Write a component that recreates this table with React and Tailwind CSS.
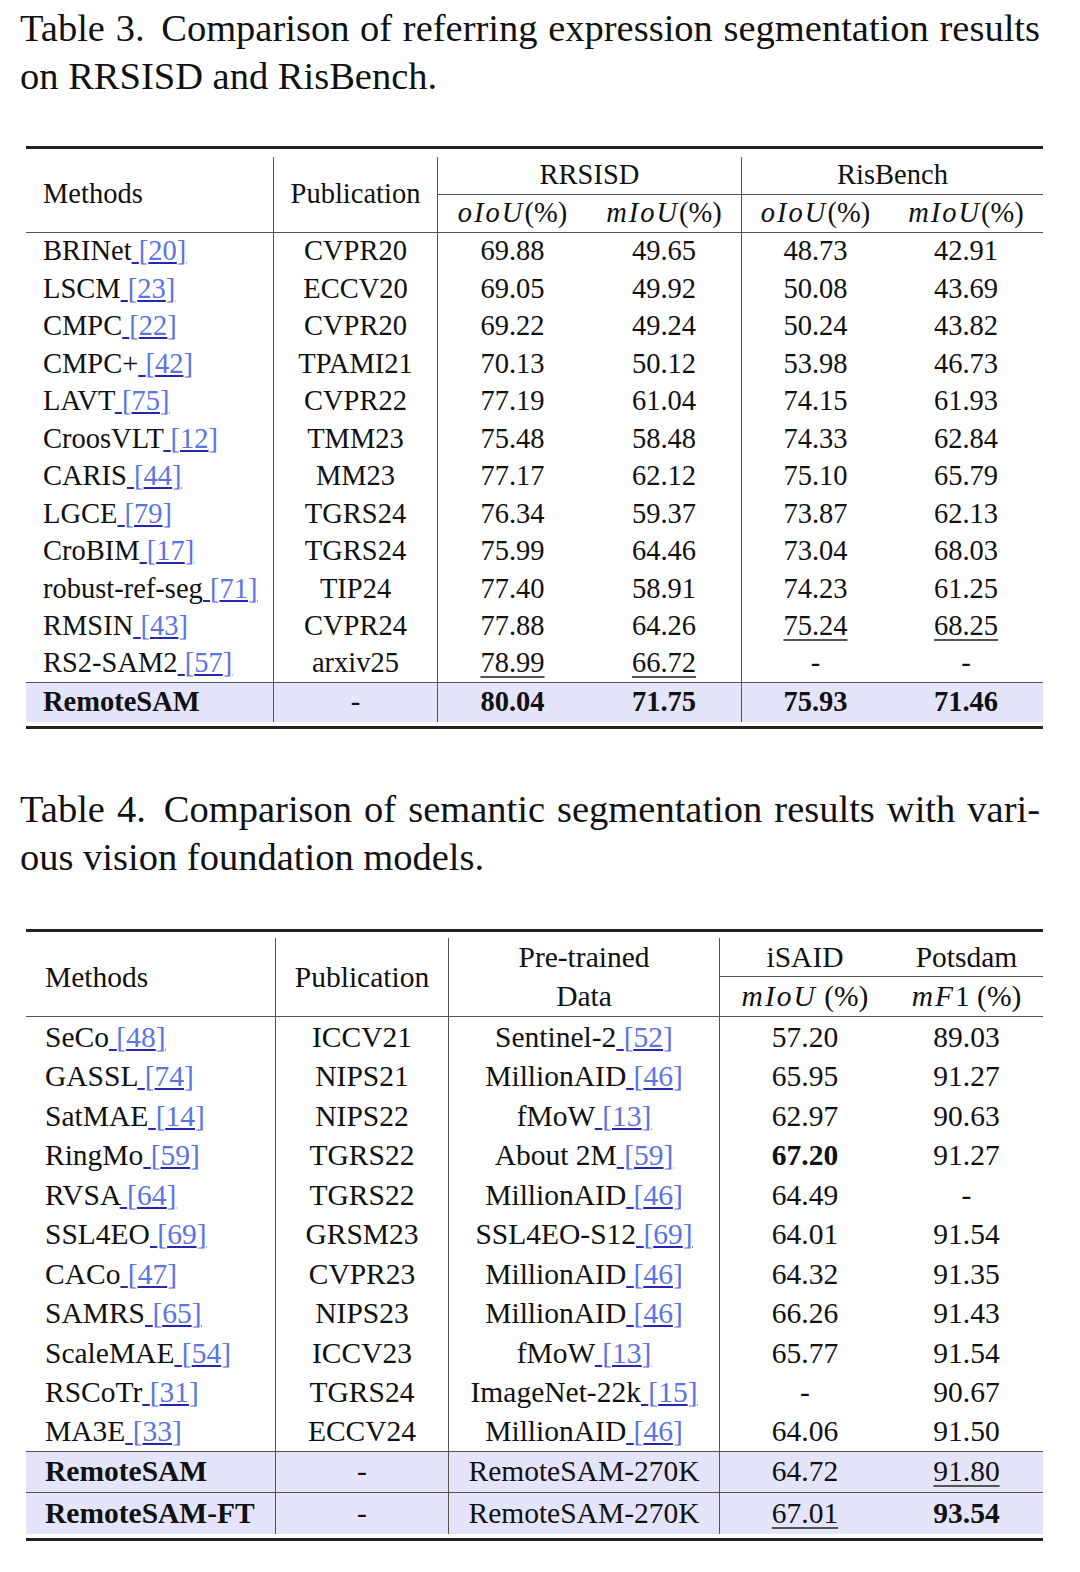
import clsx from "clsx";

const t3 = [
  ["BRINet", "20", "CVPR20", "69.88", "49.65", "48.73", "42.91"],
  ["LSCM", "23", "ECCV20", "69.05", "49.92", "50.08", "43.69"],
  ["CMPC", "22", "CVPR20", "69.22", "49.24", "50.24", "43.82"],
  ["CMPC+", "42", "TPAMI21", "70.13", "50.12", "53.98", "46.73"],
  ["LAVT", "75", "CVPR22", "77.19", "61.04", "74.15", "61.93"],
  ["CroosVLT", "12", "TMM23", "75.48", "58.48", "74.33", "62.84"],
  ["CARIS", "44", "MM23", "77.17", "62.12", "75.10", "65.79"],
  ["LGCE", "79", "TGRS24", "76.34", "59.37", "73.87", "62.13"],
  ["CroBIM", "17", "TGRS24", "75.99", "64.46", "73.04", "68.03"],
  ["robust-ref-seg", "71", "TIP24", "77.40", "58.91", "74.23", "61.25"],
  ["RMSIN", "43", "CVPR24", "77.88", "64.26", "_75.24", "_68.25"],
  ["RS2-SAM2", "57", "arxiv25", "_78.99", "_66.72", "-", "-"],
];

const t4 = [
  ["SeCo", "48", "ICCV21", "Sentinel-2", "52", "57.20", "89.03"],
  ["GASSL", "74", "NIPS21", "MillionAID", "46", "65.95", "91.27"],
  ["SatMAE", "14", "NIPS22", "fMoW", "13", "62.97", "90.63"],
  ["RingMo", "59", "TGRS22", "About 2M", "59", "*67.20", "91.27"],
  ["RVSA", "64", "TGRS22", "MillionAID", "46", "64.49", "-"],
  ["SSL4EO", "69", "GRSM23", "SSL4EO-S12", "69", "64.01", "91.54"],
  ["CACo", "47", "CVPR23", "MillionAID", "46", "64.32", "91.35"],
  ["SAMRS", "65", "NIPS23", "MillionAID", "46", "66.26", "91.43"],
  ["ScaleMAE", "54", "ICCV23", "fMoW", "13", "65.77", "91.54"],
  ["RSCoTr", "31", "TGRS24", "ImageNet-22k", "15", "-", "90.67"],
  ["MA3E", "33", "ECCV24", "MillionAID", "46", "64.06", "91.50"],
];

const Cite = ({ n }) => (
  <span className="text-[#5a74e6] underline decoration-[#2626b4] decoration-2 underline-offset-[2px]">
    {" "}[{n}]
  </span>
);

// "_" = second best (underlined), "*" = best (bold)
const Val = ({ v }) => {
  if (v.startsWith("_"))
    return (
      <span className="underline decoration-[#555] decoration-2 underline-offset-[4px]">
        {v.slice(1)}
      </span>
    );
  if (v.startsWith("*")) return <span className="font-bold">{v.slice(1)}</span>;
  return <span>{v}</span>;
};

const Mi = ({ children }) => <i className="tracking-[2px]">{children}</i>;

const cell = "flex items-center justify-center border-[#555]";

const Caption = ({ label, first, second }) => (
  <div className="pl-[20px] w-[1040px] text-[38.5px] leading-[48px] text-[#111]">
    <div className="text-justify [text-align-last:justify]">
      {label}{" "}
      <span className="ml-[6px]">{first}</span>
    </div>
    <div>{second}</div>
  </div>
);

function Table3() {
  return (
    <div className="ml-[26px] w-[1017px] text-[28.5px] text-[#111]">
      <div className="h-[3px] bg-[#222]" />
      <div className="h-[8px]" />
      <div className="grid grid-cols-[248px_164px_149px_155px_147px_154px]">
        <div className={clsx(cell, "row-span-2 justify-start pl-[17px] border-r border-b")}>Methods</div>
        <div className={clsx(cell, "row-span-2 border-r border-b")}>Publication</div>
        <div className={clsx(cell, "col-span-2 h-[38px] border-r border-b")}>RRSISD</div>
        <div className={clsx(cell, "col-span-2 h-[38px] border-b")}>RisBench</div>
        <div className={clsx(cell, "h-[38px] border-b")}><Mi>oIoU</Mi>(%)</div>
        <div className={clsx(cell, "h-[38px] border-b border-r")}><Mi>mIoU</Mi>(%)</div>
        <div className={clsx(cell, "h-[38px] border-b")}><Mi>oIoU</Mi>(%)</div>
        <div className={clsx(cell, "h-[38px] border-b")}><Mi>mIoU</Mi>(%)</div>

        {t3.map((r, i) => {
          const b = i === t3.length - 1 ? "border-b" : "";
          return [
            <div key={i + "a"} className={clsx(cell, "h-[37.5px] justify-start pl-[17px] border-r", b)}>
              <span>{r[0]}<Cite n={r[1]} /></span>
            </div>,
            <div key={i + "b"} className={clsx(cell, "h-[37.5px] border-r", b)}>{r[2]}</div>,
            <div key={i + "c"} className={clsx(cell, "h-[37.5px]", b)}><Val v={r[3]} /></div>,
            <div key={i + "d"} className={clsx(cell, "h-[37.5px] border-r", b)}><Val v={r[4]} /></div>,
            <div key={i + "e"} className={clsx(cell, "h-[37.5px]", b)}><Val v={r[5]} /></div>,
            <div key={i + "f"} className={clsx(cell, "h-[37.5px]", b)}><Val v={r[6]} /></div>,
          ];
        })}

        <div className={clsx(cell, "h-[39px] justify-start pl-[17px] border-r bg-[#e4e4fa] font-bold")}>RemoteSAM</div>
        <div className={clsx(cell, "h-[39px] border-r bg-[#e4e4fa]")}>-</div>
        <div className={clsx(cell, "h-[39px] bg-[#e4e4fa] font-bold")}>80.04</div>
        <div className={clsx(cell, "h-[39px] border-r bg-[#e4e4fa] font-bold")}>71.75</div>
        <div className={clsx(cell, "h-[39px] bg-[#e4e4fa] font-bold")}>75.93</div>
        <div className={clsx(cell, "h-[39px] bg-[#e4e4fa] font-bold")}>71.46</div>
      </div>
      <div className="h-[4px]" />
      <div className="h-[3px] bg-[#222]" />
    </div>
  );
}

function Table4() {
  const last = [
    ["RemoteSAM", "64.72", "_91.80"],
    ["RemoteSAM-FT", "_67.01", "*93.54"],
  ];
  return (
    <div className="ml-[26px] w-[1017px] text-[29.5px] text-[#111]">
      <div className="h-[3px] bg-[#222]" />
      <div className="h-[6px]" />
      <div className="grid grid-cols-[250px_173px_271px_170px_153px]">
        <div className={clsx(cell, "row-span-2 justify-start pl-[19px] border-r border-b")}>Methods</div>
        <div className={clsx(cell, "row-span-2 border-r border-b")}>Publication</div>
        <div className={clsx(cell, "h-[39px] border-r")}>Pre-trained</div>
        <div className={clsx(cell, "h-[39px] border-b")}>iSAID</div>
        <div className={clsx(cell, "h-[39px] border-b")}>Potsdam</div>
        <div className={clsx(cell, "h-[40px] border-r border-b")}>Data</div>
        <div className={clsx(cell, "h-[40px] border-b")}><Mi>mIoU</Mi>&nbsp;(%)</div>
        <div className={clsx(cell, "h-[40px] border-b")}><Mi>mF</Mi>1&nbsp;(%)</div>

        {t4.map((r, i) => {
          const b = i === t4.length - 1 ? "border-b" : "";
          return [
            <div key={i + "a"} className={clsx(cell, "h-[39.5px] justify-start pl-[19px] border-r", b)}>
              <span>{r[0]}<Cite n={r[1]} /></span>
            </div>,
            <div key={i + "b"} className={clsx(cell, "h-[39.5px] border-r", b)}>{r[2]}</div>,
            <div key={i + "c"} className={clsx(cell, "h-[39.5px] border-r", b)}>
              <span>{r[3]}<Cite n={r[4]} /></span>
            </div>,
            <div key={i + "d"} className={clsx(cell, "h-[39.5px]", b)}><Val v={r[5]} /></div>,
            <div key={i + "e"} className={clsx(cell, "h-[39.5px]", b)}><Val v={r[6]} /></div>,
          ];
        })}

        {last.map((r, i) => {
          const b = i === 0 ? "border-b" : "";
          return [
            <div key={r[0] + "a"} className={clsx(cell, "h-[41px] justify-start pl-[19px] border-r bg-[#e4e4fa] font-bold", b)}>{r[0]}</div>,
            <div key={r[0] + "b"} className={clsx(cell, "h-[41px] border-r bg-[#e4e4fa]", b)}>-</div>,
            <div key={r[0] + "c"} className={clsx(cell, "h-[41px] border-r bg-[#e4e4fa]", b)}>RemoteSAM-270K</div>,
            <div key={r[0] + "d"} className={clsx(cell, "h-[41px] bg-[#e4e4fa]", b)}><Val v={r[1]} /></div>,
            <div key={r[0] + "e"} className={clsx(cell, "h-[41px] bg-[#e4e4fa]", b)}><Val v={r[2]} /></div>,
          ];
        })}
      </div>
      <div className="h-[4px]" />
      <div className="h-[3px] bg-[#222]" />
    </div>
  );
}

export default function App() {
  return (
    <div className="w-[1080px] h-[1572px] bg-white pt-[4px] font-['Liberation_Serif',serif]">
      <Caption
        label="Table 3."
        first="Comparison of referring expression segmentation results"
        second="on RRSISD and RisBench."
      />
      <div className="h-[46px]" />
      <Table3 />
      <div className="h-[56px]" />
      <Caption
        label="Table 4."
        first="Comparison of semantic segmentation results with vari-"
        second="ous vision foundation models."
      />
      <div className="h-[48px]" />
      <Table4 />
    </div>
  );
}
